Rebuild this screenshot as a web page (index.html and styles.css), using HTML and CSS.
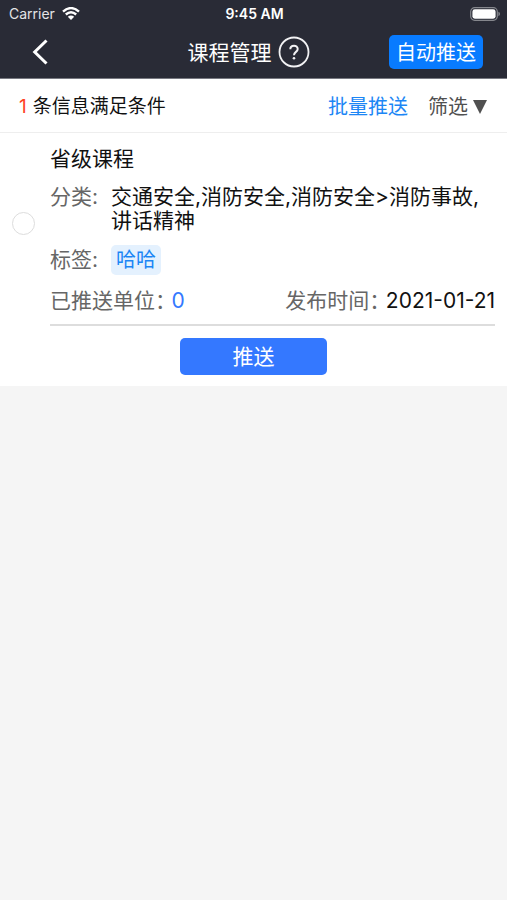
FILE: index.html
```html
<!DOCTYPE html>
<html lang="zh-CN">
<head>
<meta charset="utf-8">
<meta name="viewport" content="width=device-width, initial-scale=1">
<title>课程管理</title>
<link rel="stylesheet" href="styles.css">
</head>
<body>
<header class="top">
  <div class="status">
    <div class="carrier">
      <span>Carrier</span>
      <svg class="wifi" viewBox="0 0 18 13" aria-hidden="true">
        <path d="M1 4.6Q9-2.4 17 4.6M3.8 7.5Q9 3 14.2 7.5" fill="none" stroke="#fff" stroke-width="2.4"/>
        <path d="M9 13L5.8 9.8Q9 7 12.2 9.8Z" fill="#fff"/>
      </svg>
    </div>
    <span class="clock">9:45 AM</span>
    <svg class="battery" viewBox="0 0 30 14" aria-hidden="true">
      <rect x=".7" y=".7" width="26.6" height="12.6" rx="4" fill="none" stroke="#85878d" stroke-width="1.2"/>
      <rect x="2.4" y="2.3" width="23.2" height="9.4" rx="2.4" fill="#fff"/>
      <path d="M28.4 4.8Q30 5.4 30 7T28.4 9.2Z" fill="#85878d"/>
    </svg>
  </div>
  <nav class="bar">
    <button class="back" aria-label="返回">
      <svg viewBox="0 0 16 26" aria-hidden="true"><path d="M14.500 1.500L2.700 13L14.500 24.500" fill="none" stroke="#fff" stroke-width="3"/></svg>
    </button>
    <div class="heading">
      <h1>课程管理</h1>
      <button class="help" aria-label="帮助">
        <svg viewBox="0 0 32 32" aria-hidden="true">
          <circle cx="16" cy="16" r="14.500" fill="none" stroke="#f2f2f4" stroke-width="1.800"/>
          <path d="M12.300 13.200C12.300 8.500 19.700 8.500 19.700 13C19.700 16 16 15.800 16 19.200" fill="none" stroke="#f2f2f4" stroke-width="2"/>
          <circle cx="16" cy="22.200" r="1.300" fill="#f2f2f4"/>
        </svg>
      </button>
    </div>
    <button class="auto">自动推送</button>
  </nav>
</header>
<section class="filter">
  <p class="count"><span class="num">1</span><span>条信息满足条件</span></p>
  <button class="batch">批量推送</button>
  <button class="sift">筛选<svg viewBox="0 0 14 14" aria-hidden="true"><path d="M0 0H14L7 14Z" fill="#505050"/></svg></button>
</section>
<main>
  <article class="card">
    <input class="pick" type="radio" aria-label="选择省级课程">
    <div class="info">
      <h2>省级课程</h2>
      <div class="row category"><span class="label">分类:</span><span class="value">交通安全,消防安全,消防安全&gt;消防事故,讲话精神</span></div>
      <div class="row tags"><span class="label">标签:</span><span class="tag">哈哈</span></div>
      <div class="meta">
        <p><span class="name">已推送单位：</span><span class="sent">0</span></p>
        <p><span class="name">发布时间：</span><time datetime="2021-01-21">2021-01-21</time></p>
      </div>
    </div>
    <button class="push">推送</button>
  </article>
</main>
</body>
</html>
```
FILE: styles.css
```css
* {
  box-sizing: border-box;
}

body {
  margin: 0;
  background: #f5f5f5;
  color: #111;
  font: 21px/24px Inter, "Noto Sans CJK SC", sans-serif;
}

h1, h2, p {
  margin: 0;
  font-size: inherit;
  font-weight: 400;
}

button {
  padding: 0;
  border: 0;
  background: none;
  color: inherit;
  font: inherit;
  white-space: nowrap;
}

svg {
  display: block;
}

.top {
  background: #292b36;
  color: #fff;
  border-bottom: 1px solid #777981;
}

.status {
  display: grid;
  grid-template-columns: 1fr auto 1fr;
  align-items: center;
  height: 26px;
  padding: 1px 7px 0 9px;
  font-size: 14px;
}

.carrier {
  display: flex;
  align-items: center;
  gap: 7px;
  color: #e4e4e6;
}

.wifi {
  width: 18px;
  height: 13px;
}

.clock {
  font-weight: 600;
}

.battery {
  width: 30px;
  height: 14px;
  justify-self: end;
}

.bar {
  display: grid;
  grid-template-columns: 1fr auto 1fr;
  align-items: center;
  height: 52px;
  padding: 0 24px 0 14px;
}

.back {
  justify-self: start;
  padding-left: 18px;
}

.back svg {
  width: 16px;
  height: 26px;
}

.heading {
  display: flex;
  align-items: center;
  gap: 6px;
}

.heading h1 {
  padding-top: 2px;
}

.help svg {
  width: 32px;
  height: 32px;
}

.auto {
  justify-self: end;
  height: 34px;
  padding: 2px 7px 0;
  border-radius: 5px;
  background: #087bff;
  font-size: 20px;
}

.filter {
  display: flex;
  align-items: center;
  height: 54px;
  padding: 2px 20px 0 19px;
  border-bottom: 1px solid #eee;
  background: #fff;
  font-size: 20px;
}

.count {
  display: flex;
  gap: 6px;
  margin-right: auto;
  font-size: 19px;
}

.num {
  color: #ff431f;
}

.batch {
  margin-right: 20px;
  color: #1c86f5;
}

.sift {
  display: flex;
  align-items: center;
  gap: 5px;
  color: #505050;
}

.sift svg {
  width: 14px;
  height: 14px;
}

.card {
  display: grid;
  grid-template-columns: 23px 1fr;
  column-gap: 15px;
  padding: 14px 12px 11px;
  background: #fff;
}

.pick {
  appearance: none;
  align-self: center;
  width: 23px;
  height: 23px;
  margin: 0 0 26px;
  border: 1px solid #ddd;
  border-radius: 50%;
}

.info {
  padding-bottom: 11px;
  border-bottom: 2px solid #ddd;
}

.row {
  display: grid;
  grid-template-columns: 61px 1fr;
}

.category {
  margin-top: 14px;
}

.tags {
  align-items: center;
  margin-top: 12px;
}

.label, .name {
  color: #666;
}

.tag {
  justify-self: start;
  padding: 4px 5px;
  border-radius: 5px;
  background: #e4f1fe;
  color: #1c86f5;
  font-size: 20px;
  line-height: 22px;
}

.meta {
  display: flex;
  justify-content: space-between;
  margin-top: 14px;
}

.meta p {
  display: flex;
  gap: 6px;
}

.name {
  font-feature-settings: "halt";
}

.sent {
  color: #3478ff;
}

.push {
  grid-column: 1 / -1;
  justify-self: center;
  width: 30%;
  min-width: 147px;
  height: 37px;
  margin-top: 12px;
  border-radius: 5px;
  background: #3478ff;
  color: #fff;
}
```
